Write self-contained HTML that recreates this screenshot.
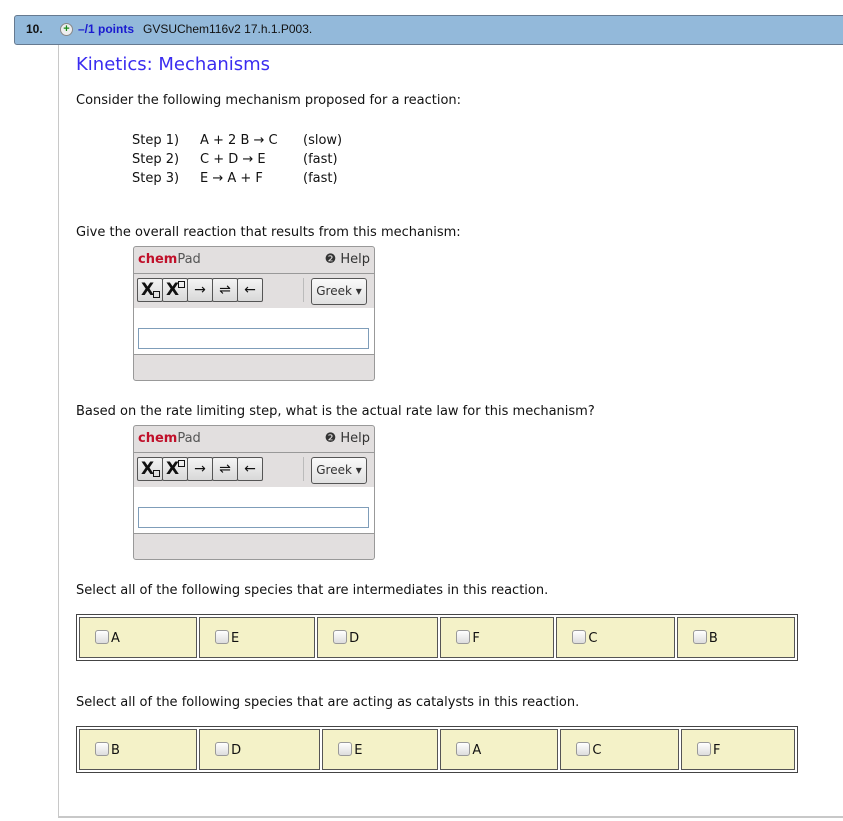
<!DOCTYPE html>
<html><head><meta charset="utf-8"><style>
body{margin:0;width:843px;height:821px;position:relative;background:#fff;font-family:"DejaVu Sans","Liberation Sans",sans-serif;font-size:13px;color:#111;overflow:hidden}
.a{position:absolute;white-space:nowrap}
.hdr{position:absolute;left:14px;top:15px;width:840px;height:28px;background:#93b9da;border:1px solid #667a90;border-radius:3px}
.vl{position:absolute;left:58px;top:45px;width:1px;height:772px;background:#c8c8c8}
.bl{position:absolute;left:58px;top:816px;width:790px;height:2px;background:#c8c8c8}
.cp{position:absolute;left:133px;width:240px;height:133px;border:1px solid #999;border-radius:3px;background:#e2dfdf;overflow:hidden}
.cp .t{position:absolute;left:4px;top:5px;font-size:13px;color:#555}
.cp .t b{color:#c0102a}
.cp .h{position:absolute;right:4px;top:5px;font-size:13px;color:#333}
.cp .tb{position:absolute;left:0;top:26px;width:240px;height:34px;border-top:1px solid #999;border-bottom:1px solid #999}
.btn{position:absolute;top:4px;width:24px;height:22px;border:1px solid #555;border-radius:2px;background:linear-gradient(#f4f4f4,#d8d8d8);text-align:center;font-size:14px;line-height:22px}
.x{font-weight:bold;font-size:17px;position:absolute;left:3px;top:0}
.sq{position:absolute;width:5px;height:5px;border:1.5px solid #111}
.gk{position:absolute;left:177px;top:4px;width:54px;height:25px;border:1px solid #555;border-radius:3px;background:linear-gradient(#fafafa,#e0e0e0);font-size:12px;line-height:25px;text-align:center;color:#333}
.cp .w{position:absolute;left:0;top:61px;width:240px;height:46px;background:#fff;border-bottom:1px solid #999}
.cp .in{position:absolute;left:4px;top:20px;width:229px;height:19px;border:1px solid #7f9db9;background:#fff}
table{position:absolute;left:76px;width:722px;height:47px;border:1px solid #444;border-spacing:2px;border-collapse:separate;padding:0}
td{background:#f4f2c8;border:1px solid #555;padding:0 0 0 15px;font-size:13px}
.cb{display:inline-block;width:12px;height:12px;border:1px solid #999;border-radius:3px;background:linear-gradient(#fff,#ddd);vertical-align:-2px;margin-right:2px}
</style></head><body>
<div class="hdr"></div>
<div class="a" style="left:26px;top:22px;font-family:'Liberation Sans',sans-serif;font-weight:bold;font-size:12px">10.</div>
<div class="a" style="left:60px;top:23px;width:11px;height:11px;border-radius:50%;background:#eee;border:1px solid #888;color:#1a8a1a;font-size:11px;line-height:11px;text-align:center;font-weight:bold;font-family:'Liberation Sans',sans-serif">+</div>
<div class="a" style="left:78px;top:22px;font-family:'Liberation Sans',sans-serif;font-size:12px;color:#1a1ad0;font-weight:bold">–/1 points</div>
<div class="a" style="left:143px;top:22px;font-family:'Liberation Sans',sans-serif;font-size:12px">GVSUChem116v2 17.h.1.P003.</div>
<div class="vl"></div><div class="bl"></div>
<div class="a" style="left:76px;top:54px;font-size:18px;color:#3a2cf0">Kinetics: Mechanisms</div>
<div class="a" style="left:76px;top:93px">Consider the following mechanism proposed for a reaction:</div>
<div class="a" style="left:132px;top:131px;line-height:19px">Step 1)<br>Step 2)<br>Step 3)</div>
<div class="a" style="left:200px;top:131px;line-height:19px">A + 2 B → C<br>C + D → E<br>E → A + F</div>
<div class="a" style="left:303px;top:131px;line-height:19px">(slow)<br>(fast)<br>(fast)</div>
<div class="a" style="left:76px;top:225px">Give the overall reaction that results from this mechanism:</div>
<div class="cp" style="top:246px"><div class="t"><b>chem</b>Pad</div><div class="h">❷ Help</div>
<div class="tb"><div class="btn" style="left:3px"><span class="x">X</span><span class="sq" style="left:15px;top:12px"></span></div><div class="btn" style="left:28px"><span class="x">X</span><span class="sq" style="left:15px;top:2px"></span></div><div class="btn" style="left:53px">→</div><div class="btn" style="left:78px">⇌</div><div class="btn" style="left:103px">←</div><div style="position:absolute;left:169px;top:4px;width:1px;height:24px;background:#bbb"></div><div class="gk">Greek ▾</div></div>
<div class="w"><div class="in"></div></div></div>
<div class="a" style="left:76px;top:404px">Based on the rate limiting step, what is the actual rate law for this mechanism?</div>
<div class="cp" style="top:425px"><div class="t"><b>chem</b>Pad</div><div class="h">❷ Help</div>
<div class="tb"><div class="btn" style="left:3px"><span class="x">X</span><span class="sq" style="left:15px;top:12px"></span></div><div class="btn" style="left:28px"><span class="x">X</span><span class="sq" style="left:15px;top:2px"></span></div><div class="btn" style="left:53px">→</div><div class="btn" style="left:78px">⇌</div><div class="btn" style="left:103px">←</div><div style="position:absolute;left:169px;top:4px;width:1px;height:24px;background:#bbb"></div><div class="gk">Greek ▾</div></div>
<div class="w"><div class="in"></div></div></div>
<div class="a" style="left:76px;top:583px">Select all of the following species that are intermediates in this reaction.</div>
<table style="top:614px"><tr><td><span class="cb"></span>A</td><td><span class="cb"></span>E</td><td><span class="cb"></span>D</td><td><span class="cb"></span>F</td><td><span class="cb"></span>C</td><td><span class="cb"></span>B</td></tr></table>
<div class="a" style="left:76px;top:695px">Select all of the following species that are acting as catalysts in this reaction.</div>
<table style="top:726px"><tr><td><span class="cb"></span>B</td><td><span class="cb"></span>D</td><td><span class="cb"></span>E</td><td><span class="cb"></span>A</td><td><span class="cb"></span>C</td><td><span class="cb"></span>F</td></tr></table>
</body></html>
